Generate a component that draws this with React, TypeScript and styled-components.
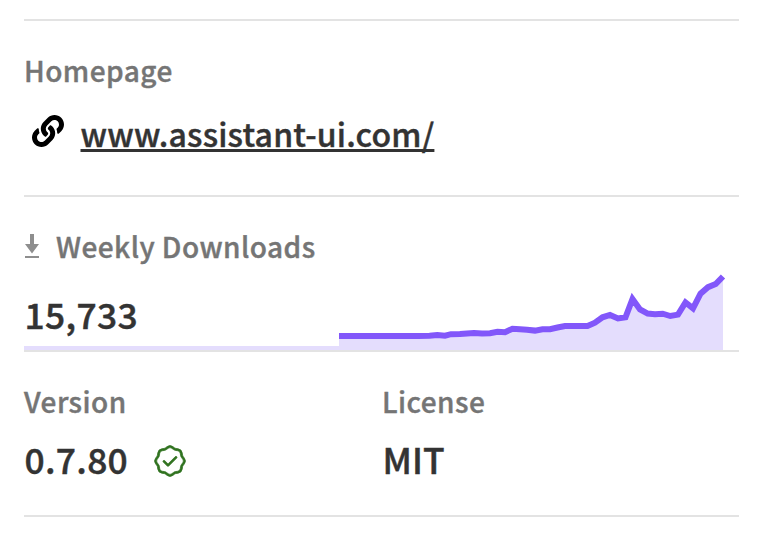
import React from "react";
import styled, { createGlobalStyle } from "styled-components";
import { FaLink } from "react-icons/fa";
import { GoVerified } from "react-icons/go";

const GlobalStyle = createGlobalStyle`
  body {
    margin: 0;
    background: #fff;
    font-family: "Source Sans Pro", "Noto Sans CJK SC", sans-serif;
    color: #333;
  }
`;

const Sidebar = styled.main`
  box-sizing: border-box;
  width: 770px;
  height: 544px;
  padding: 19px 31px 0 24px;
`;

const Section = styled.section<{ $height: number }>`
  box-sizing: border-box;
  height: ${(p) => p.$height}px;
  border-top: 2px solid #e3e3e3;
`;

const Footer = styled.div`
  border-top: 2px solid #e3e3e3;
`;

const Heading = styled.h3`
  display: flex;
  align-items: center;
  margin: 0;
  padding-top: 29px;
  font-size: 28px;
  font-weight: 500;
  line-height: 40px;
  letter-spacing: 0.45px;
  color: #757575;
  -webkit-text-stroke: 0.4px #757575;
`;

const Value = styled.p<{ $spacing?: number }>`
  margin: 0;
  padding-left: 0.5px;
  font-size: 35.4px;
  font-weight: 500;
  line-height: 48px;
  letter-spacing: ${(p) => p.$spacing ?? 0}px;
  -webkit-text-stroke: 0.45px #333;
`;

const LinkRow = styled.div`
  display: flex;
  align-items: flex-start;
  gap: 16.5px;
  padding: 19px 0 0 8px;
`;

const LinkIcon = styled(FaLink)`
  width: 32px;
  height: 32px;
  margin-top: 6px;
  color: #000;
`;

const HomeLink = styled.a`
  font-size: 32px;
  font-weight: 500;
  line-height: 48px;
  letter-spacing: 0.2px;
  color: #333;
  text-decoration: underline;
  text-decoration-thickness: 3px;
  text-underline-offset: 2px;
  text-decoration-skip-ink: none;
  -webkit-text-stroke: 0.4px #333;
`;

const DownloadIcon = styled.svg`
  width: 15px;
  height: 24px;
  margin-right: 17px;
  fill: #8e8e8e;
`;

const Stats = styled.div`
  display: flex;
  height: 84px;
`;

const Count = styled.div`
  width: 315px;
  height: 84px;
  padding-top: 24px;
  box-sizing: border-box;
  border-bottom: 4px solid #e4ddfd;
`;

const Chart = styled.svg`
  width: 388px;
  height: 84px;
`;

const Columns = styled.div`
  display: grid;
  grid-template-columns: 358px 1fr;
`;

const VersionRow = styled.div`
  display: flex;
  align-items: center;
  gap: 26px;
  padding-top: 14px;
`;

const Verified = styled(GoVerified)`
  width: 32px;
  height: 32px;
  margin-top: 4px;
  color: #30721f;
  stroke: #30721f;
  stroke-width: 0.6px;
`;

const points: [number, number][] = [
  [339, 336], [418, 336], [429.5, 335.7], [437.3, 335.1], [445, 335.7], [451, 334.2],
  [460, 334.1], [467, 333.4], [474, 333], [482, 333.5], [490, 333.2], [497.5, 331.8],
  [505, 332.2], [512.5, 328.7], [520, 329.3], [527, 329.8], [535, 330.6], [542.5, 329.3],
  [550, 329.2], [557.5, 327.5], [565, 326], [587.5, 325.9], [595, 322.7], [602.5, 317.3],
  [610, 315], [618, 318.4], [625.5, 317.3], [632.5, 299], [640, 309.4], [647.7, 313.6],
  [655, 314.2], [662.7, 313.7], [670.3, 316], [678, 314.6], [685.5, 302.5], [693, 308.3],
  [700.5, 293.6], [708, 287.2], [715.7, 284], [723, 276.5],
];
const line = points.map(([x, y]) => `${x},${y}`).join(" ");

export default function App() {
  return (
    <Sidebar>
      <GlobalStyle />
      <Section $height={176}>
        <Heading>Homepage</Heading>
        <LinkRow>
          <LinkIcon />
          <HomeLink href="#">www.assistant-ui.com/</HomeLink>
        </LinkRow>
      </Section>
      <Section $height={155}>
        <Heading>
          <DownloadIcon viewBox="0 0 15 24">
            <path d="M6 0h4v10h5l-7 9.4L1 10h5zM1 22h14v2H1z" />
          </DownloadIcon>
          Weekly Downloads
        </Heading>
        <Stats>
          <Count>
            <Value $spacing={0.35}>15,733</Value>
          </Count>
          <Chart viewBox="339 266 388 84">
            <polygon points={`${line} 723,350 339,350`} fill="#e4ddfd" />
            <polyline points={line} fill="none" stroke="#8257fa" strokeWidth="6" />
          </Chart>
        </Stats>
      </Section>
      <Section $height={165}>
        <Columns>
          <div>
            <Heading>Version</Heading>
            <VersionRow>
              <Value $spacing={0.3}>0.7.80</Value>
              <Verified />
            </VersionRow>
          </div>
          <div>
            <Heading>License</Heading>
            <VersionRow>
              <Value $spacing={0.1}>MIT</Value>
            </VersionRow>
          </div>
        </Columns>
      </Section>
      <Footer />
    </Sidebar>
  );
}
